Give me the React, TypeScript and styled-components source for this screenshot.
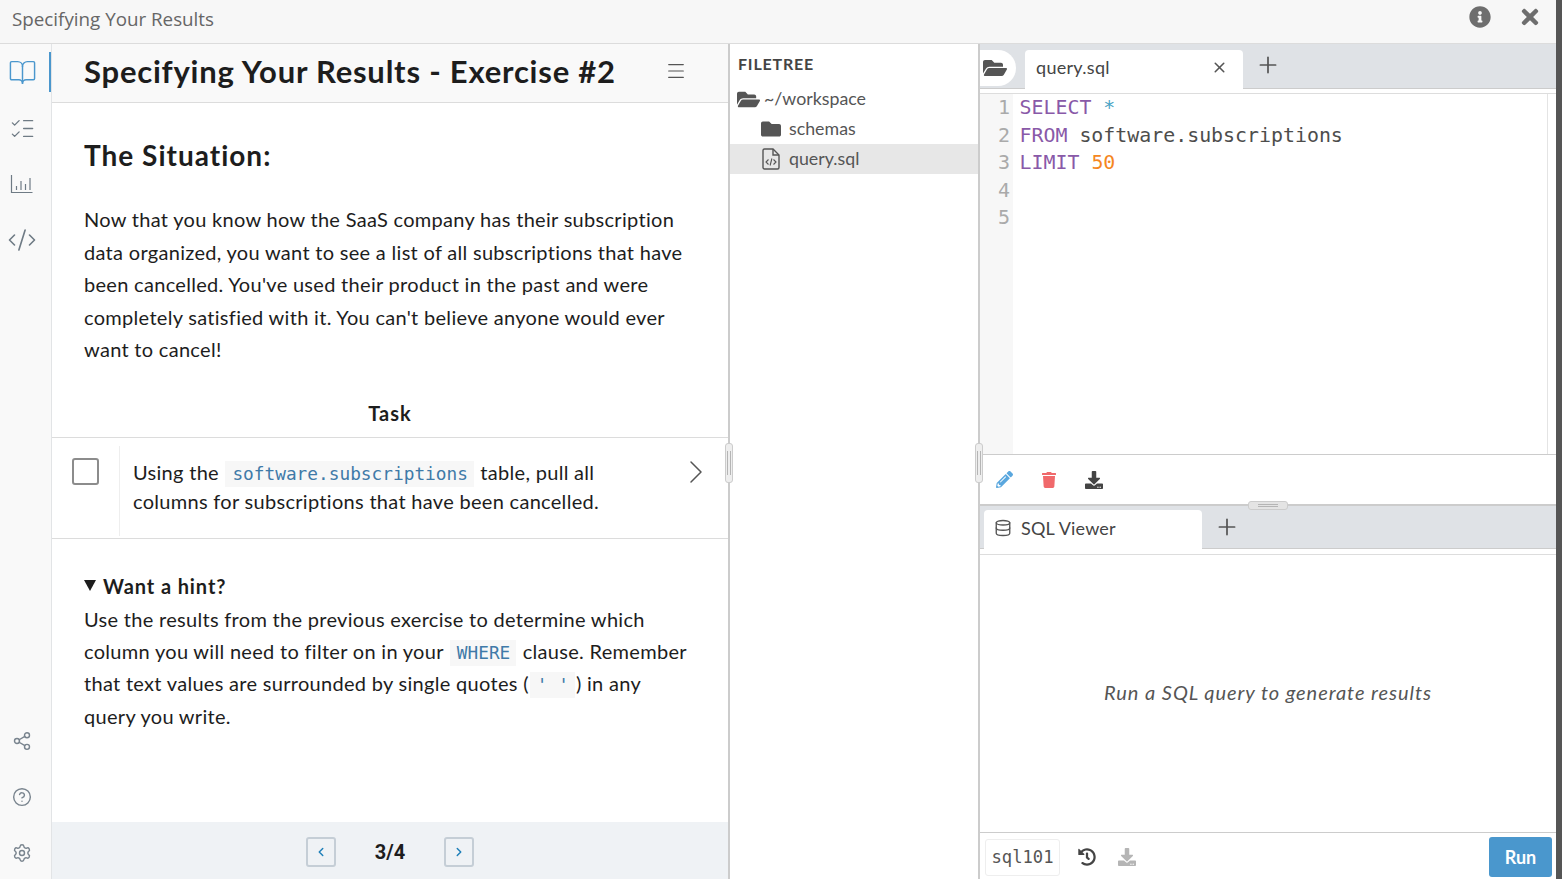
import React from "react";
import styled, { createGlobalStyle } from "styled-components";
import { BookOpen, ListChecks, CodeXml, Database, Share2, CircleHelp, Settings, ChevronLeft, ChevronRight, Menu, Plus, X } from "lucide-react";
import { FaDownload, FaFolder, FaFolderOpen, FaHistory, FaInfoCircle, FaPencilAlt, FaTimes, FaTrash } from "react-icons/fa";

const GlobalStyle = createGlobalStyle`
    html, body {
        margin: 0;
        padding: 0;
        height: 100%;
        overflow: hidden;
        background: #555555;
    }
    * {
        box-sizing: border-box;
    }
    #root {
        height: 100%;
    }
`;

const mono = `"DejaVu Sans Mono", "Liberation Mono", monospace`;
const sans = `Lato, "Open Sans", sans-serif`;

const codeLines: React.ReactNode[] = [
    <><Kw>SELECT</Kw> <Star>*</Star></>,
    <><Kw>FROM</Kw> software.subscriptions</>,
    <><Kw>LIMIT</Kw> <Num>50</Num></>,
    "",
    "",
];

function Kw({ children }: { children: React.ReactNode }) {
    return <KwSpan>{children}</KwSpan>;
}
function Star({ children }: { children: React.ReactNode }) {
    return <StarSpan>{children}</StarSpan>;
}
function Num({ children }: { children: React.ReactNode }) {
    return <NumSpan>{children}</NumSpan>;
}

function BarsIcon() {
    return (
        <svg width="24" height="24" viewBox="0 0 24 24" fill="none" stroke="currentColor" strokeWidth="1.2">
            <path d="M1.500 3v17.500h21" />
            <path d="M6.500 14v4M11 9v9M15.500 12v6M20 6v12" />
        </svg>
    );
}

function FileCodeIcon() {
    return (
        <svg width="18" height="22" viewBox="0 0 18 22" fill="none" stroke="#555" strokeWidth="1.4">
            <path d="M2.500 1h8.500l6 6v12.500a1.500 1.500 0 0 1-1.500 1.500h-13A1.500 1.500 0 0 1 1 19.500v-17A1.500 1.500 0 0 1 2.500 1z" />
            <path d="M11 1v6h6" />
            <path d="M6.500 11.500l-2.500 2.500 2.500 2.500M11.500 11.500l2.500 2.500-2.500 2.500M9.900 10.500l-1.800 7" strokeWidth="1.100" />
        </svg>
    );
}

export default function App() {
    return (
        <Page>
            <GlobalStyle />
            <TopBar>
                <WindowTitle>Specifying Your Results</WindowTitle>
                <TopActions>
                    <FaInfoCircle size={22} color="#6e6e6e" />
                    <FaTimes size={24} color="#6e6e6e" />
                </TopActions>
            </TopBar>
            <Body>
                <SideRail>
                    <RailGroup>
                        <RailItem $active><BookOpen size={29} strokeWidth={1.2} /></RailItem>
                        <RailItem><ListChecks size={27} strokeWidth={1.2} /></RailItem>
                        <RailItem><BarsIcon /></RailItem>
                        <RailItem><CodeXml size={30} strokeWidth={1.3} /></RailItem>
                    </RailGroup>
                    <RailFoot>
                        <RailFootItem><Share2 size={20} strokeWidth={1.7} /></RailFootItem>
                        <RailFootItem><CircleHelp size={20} strokeWidth={1.7} /></RailFootItem>
                        <RailFootItem><Settings size={20} strokeWidth={1.7} /></RailFootItem>
                    </RailFoot>
                </SideRail>

                <LessonPanel>
                    <LessonHeader>
                        <LessonTitle>Specifying Your Results - Exercise #2</LessonTitle>
                        <Menu size={22} strokeWidth={1.2} color="#555" />
                    </LessonHeader>
                    <LessonScroll>
                        <Situation>The Situation:</Situation>
                        <Paragraph>
                            Now that you know how the SaaS company has their subscription data organized, you want to see a list of all subscriptions that have been cancelled. You've used their product in the past and were completely satisfied with it. You can't believe anyone would ever want to cancel!
                        </Paragraph>
                        <TaskLabel>Task</TaskLabel>
                        <TaskRow>
                            <CheckCell><CheckBox /></CheckCell>
                            <TaskText>
                                Using the <InlineCode>software.subscriptions</InlineCode> table, pull all columns for subscriptions that have been cancelled.
                            </TaskText>
                            <TaskChevron><ChevronRight size={40} strokeWidth={0.9} color="#555" /></TaskChevron>
                        </TaskRow>
                        <Hint>
                            <HintTitle><Triangle />Want a hint?</HintTitle>
                            <HintText>
                                Use the results from the previous exercise to determine which column you will need to filter on in your <InlineCode>WHERE</InlineCode> clause. Remember that text values are surrounded by single quotes (<InlineCode>' '</InlineCode>) in any query you write.
                            </HintText>
                        </Hint>
                    </LessonScroll>
                    <Pager>
                        <PagerButton><ChevronLeft size={14} strokeWidth={2.5} /></PagerButton>
                        <PagerCount>3/4</PagerCount>
                        <PagerButton><ChevronRight size={14} strokeWidth={2.5} /></PagerButton>
                    </Pager>
                </LessonPanel>

                <Splitter><Grip /></Splitter>

                <FileTree>
                    <TreeHeading>FILETREE</TreeHeading>
                    <TreeRow $depth={0}><FaFolderOpen size={23} color="#555" /><TreeName>~/workspace</TreeName></TreeRow>
                    <TreeRow $depth={1}><FaFolder size={20} color="#555" /><TreeName>schemas</TreeName></TreeRow>
                    <TreeRow $depth={1} $selected><TreeIconSlot><FileCodeIcon /></TreeIconSlot><TreeName>query.sql</TreeName></TreeRow>
                </FileTree>

                <Splitter><Grip /></Splitter>

                <Workspace>
                    <TabBar>
                        <FolderTab><FaFolderOpen size={24} color="#555" /></FolderTab>
                        <FileTab>
                            <FileTabName>query.sql</FileTabName>
                            <X size={17} strokeWidth={2.2} color="#555" />
                        </FileTab>
                        <AddTab><Plus size={26} strokeWidth={1.6} /></AddTab>
                    </TabBar>
                    <Editor>
                        <Gutter>
                            {codeLines.map((_, i) => <LineNo key={i}>{i + 1}</LineNo>)}
                        </Gutter>
                        <CodeArea>
                            {codeLines.map((line, i) => <CodeLine key={i}>{line}</CodeLine>)}
                        </CodeArea>
                    </Editor>
                    <EditorTools>
                        <FaPencilAlt size={17} color="#5aa7de" />
                        <FaTrash size={16} color="#f0696b" />
                        <FaDownload size={18} color="#444" />
                    </EditorTools>
                    <ViewerTabs>
                        <HandleBar />
                        <ViewerTab>
                            <Database size={18} strokeWidth={1.8} color="#555" />
                            <ViewerTabName>SQL Viewer</ViewerTabName>
                        </ViewerTab>
                        <ViewerAdd><Plus size={26} strokeWidth={1.6} /></ViewerAdd>
                    </ViewerTabs>
                    <Viewer>Run a SQL query to generate results</Viewer>
                    <Footer>
                        <DbName>sql101</DbName>
                        <FaHistory size={18} color="#444" />
                        <FooterDownload><FaDownload size={18} color="#b5b5b5" /></FooterDownload>
                        <RunButton>Run</RunButton>
                    </Footer>
                </Workspace>
            </Body>
        </Page>
    );
}

const Page = styled.div`
    width: 1556px;
    height: 879px;
    display: flex;
    flex-direction: column;
    background: #ffffff;
    color: #1d1d1d;
    font-family: ${sans};
`;

const TopBar = styled.div`
    height: 44px;
    flex: none;
    display: flex;
    align-items: center;
    justify-content: space-between;
    padding: 0 14px 9px 12px;
    background: #f7f7f7;
    border-bottom: 1px solid #dcdcdc;
`;

const WindowTitle = styled.div`
    margin-top: 4px;
    font-family: "Open Sans", sans-serif;
    font-size: 18.8px;
    color: #666666;
`;

const TopActions = styled.div`
    display: flex;
    align-items: center;
    gap: 27px;
`;

const Body = styled.div`
    flex: 1;
    min-height: 0;
    display: flex;
`;

const SideRail = styled.div`
    width: 52px;
    flex: none;
    display: flex;
    flex-direction: column;
    justify-content: space-between;
    background: #f9f9f9;
    border-right: 1px solid #e2e4e6;
`;

const RailGroup = styled.div`
    display: flex;
    flex-direction: column;
    padding-top: 8px;
`;

const RailItem = styled.div<{ $active?: boolean }>`
    height: 56px;
    width: 51px;
    padding-right: 7px;
    display: flex;
    align-items: center;
    justify-content: center;
    color: ${(p) => (p.$active ? "#4b97cd" : "#6f7b85")};
    ${(p) => p.$active && "height: 40px; margin-bottom: 8px; border-right: 2px solid #4b97cd; padding-right: 5px;"}
`;

const RailFoot = styled.div`
    display: flex;
    flex-direction: column;
    align-items: center;
    gap: 37px;
    padding: 0 7px 17px 0;
    color: #79848e;
`;

const RailFootItem = styled.div`
    height: 19px;
    display: flex;
    align-items: center;
`;

const LessonPanel = styled.div`
    width: 676px;
    flex: none;
    display: flex;
    flex-direction: column;
`;

const LessonHeader = styled.div`
    height: 59px;
    flex: none;
    display: flex;
    align-items: center;
    justify-content: space-between;
    padding: 0 41px 4px 32px;
    background: #f9f9f9;
    border-bottom: 1px solid #dcdcdc;
`;

const LessonTitle = styled.div`
    font-size: 31px;
    font-weight: 700;
    letter-spacing: 0.78px;
`;

const LessonScroll = styled.div`
    flex: 1;
    min-height: 0;
    overflow: hidden;
`;

const Situation = styled.h2`
    margin: 35px 32px 0;
    font-size: 28px;
    line-height: 34px;
    font-weight: 700;
    letter-spacing: 1px;
`;

const Paragraph = styled.p`
    margin: 31px 32px 0;
    font-size: 20px;
    line-height: 32.5px;
    letter-spacing: 0.3px;
`;

const TaskLabel = styled.div`
    margin-top: 31px;
    height: 32px;
    text-align: center;
    font-size: 20px;
    line-height: 32px;
    font-weight: 700;
    letter-spacing: 1px;
`;

const TaskRow = styled.div`
    position: relative;
    height: 102px;
    display: flex;
    align-items: flex-start;
    border-top: 1px solid #dcdcdc;
    border-bottom: 1px solid #dcdcdc;
    margin-top: 8px;
`;

const CheckCell = styled.div`
    width: 68px;
    height: 90px;
    flex: none;
    margin-top: 8px;
    padding: 12px 0 0 20px;
    border-right: 1px solid #eeeeee;
`;

const CheckBox = styled.div`
    width: 27px;
    height: 27px;
    background: #ffffff;
    border: 2px solid #8c8c8c;
    border-radius: 3px;
`;

const TaskText = styled.div`
    flex: 1;
    padding: 20px 100px 0 13px;
    font-size: 20px;
    line-height: 29px;
    letter-spacing: 0.3px;
`;

const TaskChevron = styled.div`
    position: absolute;
    top: 14px;
    right: 12px;
    height: 40px;
`;

const InlineCode = styled.code`
    display: inline-block;
    font-family: ${mono};
    font-size: 17.8px;
    line-height: 26px;
    letter-spacing: 0;
    color: #3f7aa8;
    background: #f7f7f7;
    padding: 0 6px 0 7px;
    margin: 0 1px;
`;

const Hint = styled.div`
    padding: 31px 32px 0;
`;

const HintTitle = styled.div`
    display: flex;
    align-items: center;
    gap: 7px;
    font-size: 20px;
    line-height: 32px;
    font-weight: 700;
    letter-spacing: 0.9px;
`;

const Triangle = styled.span`
    width: 0;
    height: 0;
    border-left: 6.500px solid transparent;
    border-right: 6.500px solid transparent;
    border-top: 11px solid #1d1d1d;
`;

const HintText = styled.div`
    margin-top: 1px;
    font-size: 20px;
    line-height: 32.4px;
    letter-spacing: 0.3px;
`;

const Pager = styled.div`
    height: 57px;
    flex: none;
    display: flex;
    align-items: center;
    justify-content: center;
    background: #eff2f5;
    padding-top: 2px;
`;

const PagerButton = styled.div`
    width: 30px;
    height: 30px;
    display: flex;
    align-items: center;
    justify-content: center;
    color: #1e7fb8;
    border: 2px solid #c5ced6;
    border-radius: 3px;
`;

const PagerCount = styled.div`
    width: 108px;
    padding-top: 1px;
    text-align: center;
    font-family: Roboto, sans-serif;
    font-size: 20px;
    font-weight: 700;
`;

const Splitter = styled.div`
    position: relative;
    width: 2px;
    flex: none;
    background: #cccccc;
`;

const Grip = styled.div`
    position: absolute;
    left: -3px;
    top: 399px;
    width: 8px;
    height: 40px;
    background: #eeeeee;
    border: 1px solid #cccccc;
    border-radius: 3px;
    &::after {
        content: "";
        position: absolute;
        left: 1px;
        right: 1px;
        top: 7px;
        bottom: 7px;
        border-left: 1px solid #b5b5b5;
        border-right: 1px solid #b5b5b5;
    }
`;

const FileTree = styled.div`
    width: 248px;
    flex: none;
`;

const TreeHeading = styled.div`
    height: 40px;
    padding-left: 8px;
    font-size: 16px;
    line-height: 40px;
    font-weight: 700;
    letter-spacing: 0.8px;
    color: #444444;
`;

const TreeRow = styled.div<{ $depth: number; $selected?: boolean }>`
    height: 30px;
    display: flex;
    align-items: center;
    gap: ${(p) => (p.$depth ? "8px" : "4px")};
    padding-left: ${(p) => (p.$depth ? "31px" : "7px")};
    background: ${(p) => (p.$selected ? "#e7e7e7" : "transparent")};
    color: #555555;
`;

const TreeIconSlot = styled.div`
    width: 20px;
    display: flex;
    justify-content: center;
`;

const TreeName = styled.span`
    font-size: 17.8px;
    margin-top: -2px;
`;

const Workspace = styled.div`
    flex: 1;
    min-width: 0;
    display: flex;
    flex-direction: column;
`;

const TabBar = styled.div`
    height: 45px;
    flex: none;
    display: flex;
    align-items: flex-end;
    background: #dfe2e6;
    border-bottom: 1px solid #cccccc;
`;

const FolderTab = styled.div`
    width: 36px;
    height: 36px;
    margin-bottom: 2px;
    padding-left: 3px;
    display: flex;
    align-items: center;
    background: #ffffff;
    border-radius: 0 18px 18px 0;
`;

const FileTab = styled.div`
    width: 218px;
    height: 39px;
    margin-left: 9px;
    margin-bottom: -1px;
    padding: 0 15px 5px 11px;
    display: flex;
    align-items: center;
    justify-content: space-between;
    background: #ffffff;
    border-radius: 4px 4px 0 0;
`;

const FileTabName = styled.span`
    font-size: 18px;
    letter-spacing: 0.3px;
    color: #444444;
`;

const AddTab = styled.div`
    height: 44px;
    padding: 0 0 2px 12px;
    display: flex;
    align-items: center;
    color: #555555;
`;

const Editor = styled.div`
    height: 362px;
    flex: none;
    margin-top: 4px;
    display: flex;
    border-top: 1px solid #dddddd;
    border-bottom: 1px solid #cccccc;
`;

const Gutter = styled.div`
    width: 33px;
    flex: none;
    padding-right: 3px;
    background: #f7f7f7;
    text-align: right;
`;

const LineNo = styled.div`
    height: 27.500px;
    font-family: ${mono};
    font-size: 20px;
    line-height: 27.500px;
    color: #aaaaaa;
`;

const CodeArea = styled.div`
    flex: 1;
    padding-left: 6.500px;
    border-right: 1px solid #e4e4e4;
    margin-right: 8px;
`;

const CodeLine = styled.div`
    height: 27.500px;
    font-family: ${mono};
    font-size: 19.9px;
    line-height: 27.500px;
    color: #4d4d4c;
    white-space: pre;
`;

const KwSpan = styled.span`
    color: #8959a8;
`;

const StarSpan = styled.span`
    color: #4aa3c4;
`;

const NumSpan = styled.span`
    color: #f5871f;
`;

const EditorTools = styled.div`
    height: 49px;
    flex: none;
    display: flex;
    align-items: center;
    gap: 28px;
    padding-left: 16px;
`;

const ViewerTabs = styled.div`
    position: relative;
    height: 45px;
    flex: none;
    display: flex;
    align-items: flex-end;
    background: #dfe2e6;
    border-top: 2px solid #cccccc;
    border-bottom: 1px solid #cccccc;
    padding-left: 4px;
`;

const HandleBar = styled.div`
    position: absolute;
    left: 268px;
    top: -5px;
    width: 40px;
    height: 9px;
    background: #e4e4e4;
    border: 1px solid #cccccc;
    border-radius: 3px;
    &::after {
        content: "";
        position: absolute;
        left: 9px;
        right: 9px;
        top: 2px;
        bottom: 2px;
        border-top: 1px solid #b5b5b5;
        border-bottom: 1px solid #b5b5b5;
    }
`;

const ViewerTab = styled.div`
    width: 218px;
    height: 39px;
    margin-bottom: -1px;
    padding: 0 0 4px 10px;
    display: flex;
    align-items: center;
    gap: 9px;
    background: #ffffff;
    border-radius: 4px 4px 0 0;
`;

const ViewerTabName = styled.span`
    font-size: 18px;
    letter-spacing: 0.2px;
    color: #444444;
`;

const ViewerAdd = styled.div`
    height: 44px;
    padding: 2px 0 0 12px;
    display: flex;
    align-items: center;
    color: #555555;
`;

const Viewer = styled.div`
    flex: 1;
    min-height: 0;
    margin-top: 5px;
    padding-bottom: 4px;
    display: flex;
    align-items: center;
    justify-content: center;
    font-size: 20px;
    font-style: italic;
    letter-spacing: 0.95px;
    color: #555555;
    border-top: 1px solid #dddddd;
`;

const Footer = styled.div`
    height: 47px;
    flex: none;
    display: flex;
    align-items: center;
    gap: 18px;
    padding: 2px 4px 0 5px;
    border-top: 1px solid #cccccc;
`;

const FooterDownload = styled.div`
    display: flex;
    margin-left: 4px;
`;

const DbName = styled.div`
    width: 75px;
    height: 37px;
    display: flex;
    align-items: center;
    justify-content: center;
    font-family: ${mono};
    font-size: 17.2px;
    color: #555555;
    border: 1px solid #eeeeee;
    border-radius: 3px;
`;

const RunButton = styled.div`
    width: 63px;
    height: 40px;
    margin-left: auto;
    display: flex;
    align-items: center;
    justify-content: center;
    font-size: 18px;
    font-weight: 700;
    color: #ffffff;
    background: #4a97cd;
    border-radius: 3px;
`;
